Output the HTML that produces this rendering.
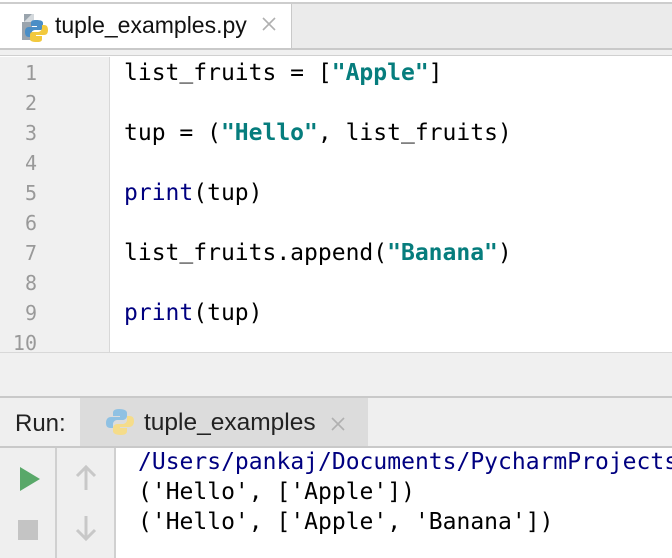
<!DOCTYPE html>
<html><head><style>
*{margin:0;padding:0;box-sizing:border-box}
body{width:672px;height:558px;overflow:hidden;background:#fff;position:relative;font-family:"Liberation Sans",sans-serif}
.abs{position:absolute}
.mono{font-family:"DejaVu Sans Mono","Liberation Mono",monospace;font-size:23px;white-space:pre;line-height:30px}
.ln{position:absolute;left:0;width:37px;text-align:right;color:#999;font-size:20px}
.code{position:absolute;left:124px;color:#000}
.s{color:#067d7d;font-weight:bold}
.k{color:#000080}
.u{position:relative;top:-2px}
</style></head><body>
<div class="abs" style="left:0;top:2px;width:672px;height:2px;background:#cdcdcd"></div>
<div class="abs" style="left:0;top:4px;width:672px;height:45px;background:#ebebeb"></div>
<div class="abs" style="left:0;top:4px;width:292px;height:45px;background:#fff;border-right:1px solid #c9c9c9"></div>
<svg class="abs" style="left:22px;top:12px" width="28" height="30" viewBox="0 0 28 30">
<path d="M2 2h8l-8 8z" fill="#9aa4ad"/><path d="M2 10 10 2h2v8H2z" fill="#b8c0c7" opacity=".6"/>
<rect x="0" y="10" width="10" height="18" fill="#9aa4ad"/>
<path d="M14 8c-4 0-5 1-5 3v3h6v1H7c-3 0-4 2-4 5s1 5 4 5h2v-3c0-2 2-4 4-4h5c2 0 3-1 3-3v-4c0-2-2-3-7-3z" fill="#4a8ec6"/>
<path d="M15 30c4 0 5-1 5-3v-3h-6v-1h8c3 0 4-2 4-5s-1-5-4-5h-2v3c0 2-2 4-4 4h-5c-2 0-3 1-3 3v4c0 2 2 3 7 3z" fill="#f2c93e"/>
</svg>
<div class="abs" style="left:55px;top:12px;font-size:23px;color:#111">tuple_examples.py</div>
<svg class="abs" style="left:262px;top:17px" width="14" height="14" stroke="#b0b0b0" stroke-width="1.6"><path d="M1 1 13 13M13 1 1 13"/></svg>
<div class="abs" style="left:0;top:48px;width:672px;height:2px;background:#c9c9c9"></div>
<div class="abs" style="left:0;top:50px;width:672px;height:6px;background:#f0f0f0;border-bottom:1px solid #d0d0d0"></div>
<div class="abs" style="left:0;top:57px;width:110px;height:295px;background:#f0f0f0;border-right:1px solid #d8d8d8"></div>
<div class="mono">
<div class="ln" style="top:58px">1</div><div class="ln" style="top:88px">2</div><div class="ln" style="top:118px">3</div><div class="ln" style="top:148px">4</div><div class="ln" style="top:178px">5</div><div class="ln" style="top:208px">6</div><div class="ln" style="top:238px">7</div><div class="ln" style="top:268px">8</div><div class="ln" style="top:298px">9</div><div class="ln" style="top:328px;height:24px;overflow:hidden">10</div>
<div class="code" style="top:58px">list<span class="u">_</span>fruits = [<span class="s">"Apple"</span>]</div>
<div class="code" style="top:118px">tup = (<span class="s">"Hello"</span>, list<span class="u">_</span>fruits)</div>
<div class="code" style="top:178px"><span class="k">print</span>(tup)</div>
<div class="code" style="top:238px">list<span class="u">_</span>fruits.append(<span class="s">"Banana"</span>)</div>
<div class="code" style="top:298px"><span class="k">print</span>(tup)</div>
</div>
<div class="abs" style="left:0;top:352px;width:672px;height:45px;background:#f0f0f0;border-top:1px solid #d8d8d8"></div>
<div class="abs" style="left:0;top:396px;width:672px;height:2px;background:#c9c9c9"></div>
<div class="abs" style="left:0;top:398px;width:672px;height:49px;background:#efefef"></div>
<div class="abs" style="left:80px;top:398px;width:288px;height:49px;background:#dcdcdc"></div>
<div class="abs" style="left:15px;top:410px;font-size:24px;color:#222">Run:</div>
<svg class="abs" style="left:106px;top:408px" width="28" height="28" viewBox="0 0 28 28">
<path d="M13 1c-5 0-6 2-6 4v3h7v1H5c-3 0-5 2-5 6s2 5 5 5h2v-4c0-2 2-4 4-4h6c2 0 4-2 4-4V5c0-2-2-4-8-4z" fill="#8fc1e3"/>
<path d="M15 27c5 0 6-2 6-4v-3h-7v-1h9c3 0 5-2 5-6s-2-5-5-5h-2v4c0 2-2 4-4 4h-6c-2 0-4 2-4 4v3c0 2 2 4 8 4z" fill="#f5dc8a"/>
</svg>
<div class="abs" style="left:144px;top:409px;font-size:24.5px;color:#222">tuple_examples</div>
<svg class="abs" style="left:331px;top:417px" width="14" height="14" stroke="#b0b0b0" stroke-width="1.6"><path d="M1 1 13 13M13 1 1 13"/></svg>
<div class="abs" style="left:0;top:446px;width:672px;height:2px;background:#c9c9c9"></div>
<div class="abs" style="left:0;top:448px;width:115px;height:110px;background:#efefef"></div>
<div class="abs" style="left:55px;top:448px;width:2px;height:110px;background:#d0d0d0"></div>
<div class="abs" style="left:114px;top:448px;width:2px;height:110px;background:#d0d0d0"></div>
<svg class="abs" style="left:19px;top:466px" width="22" height="26"><path d="M1 1 21 13 1 25z" fill="#59a869"/></svg>
<div class="abs" style="left:18px;top:520px;width:20px;height:20px;background:#c4c4c4"></div>
<svg class="abs" style="left:74px;top:464px" width="24" height="28" fill="none" stroke="#c8c8c8" stroke-width="3"><path d="M12 26V3M3 12l9-9 9 9"/></svg>
<svg class="abs" style="left:74px;top:514px" width="24" height="28" fill="none" stroke="#c8c8c8" stroke-width="3"><path d="M12 2v23M3 16l9 9 9-9"/></svg>
<div class="mono">
<div class="abs" style="left:138px;top:447px;color:#000080">/Users/pankaj/Documents/PycharmProjects</div>
<div class="abs" style="left:138px;top:477px">('Hello', ['Apple'])</div>
<div class="abs" style="left:138px;top:507px">('Hello', ['Apple', 'Banana'])</div>
</div>
</body></html>
